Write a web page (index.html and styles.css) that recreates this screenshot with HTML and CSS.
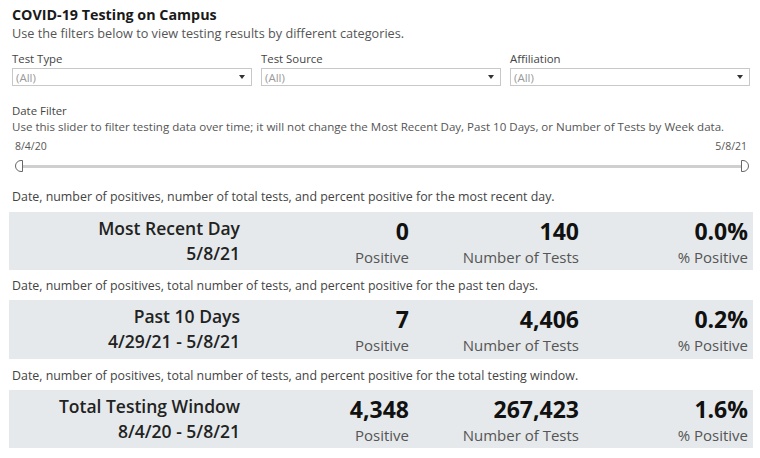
FILE: index.html
```html
<!DOCTYPE html>
<html>
<head>
<meta charset="utf-8">
<link rel="stylesheet" href="styles.css">
</head>
<body>
<div class="page">
  <h1 class="title">COVID-19 Testing on Campus</h1>
  <p class="sub">Use the filters below to view testing results by different categories.</p>
  <div class="filters">
    <div class="filter">
      <div class="flabel">Test Type</div>
      <div class="select"><span>(All)</span><span class="caret"></span></div>
    </div>
    <div class="filter">
      <div class="flabel">Test Source</div>
      <div class="select"><span>(All)</span><span class="caret"></span></div>
    </div>
    <div class="filter">
      <div class="flabel">Affiliation</div>
      <div class="select"><span>(All)</span><span class="caret"></span></div>
    </div>
  </div>
  <div class="datefilter">
    <div class="flabel">Date Filter</div>
    <div class="desc">Use this slider to filter testing data over time; it will not change the Most Recent Day, Past 10 Days, or Number of Tests by Week data.</div>
    <div class="range"><span>8/4/20</span><span>5/8/21</span></div>
    <div class="slider">
      <span class="handle left"></span>
      <span class="track"></span>
      <span class="handle right"></span>
    </div>
  </div>

  <p class="caption first">Date, number of positives, number of total tests, and percent positive for the most recent day.</p>
  <div class="panel first">
    <div class="cell label"><div class="big">Most Recent Day</div><div class="big">5/8/21</div></div>
    <div class="cell"><div class="num">0</div><div class="unit">Positive</div></div>
    <div class="cell"><div class="num">140</div><div class="unit">Number of Tests</div></div>
    <div class="cell"><div class="num">0.0%</div><div class="unit">% Positive</div></div>
  </div>

  <p class="caption">Date, number of positives, total number of tests, and percent positive for the past ten days.</p>
  <div class="panel tall">
    <div class="cell label"><div class="big">Past 10 Days</div><div class="big">4/29/21 - 5/8/21</div></div>
    <div class="cell"><div class="num">7</div><div class="unit">Positive</div></div>
    <div class="cell"><div class="num">4,406</div><div class="unit">Number of Tests</div></div>
    <div class="cell"><div class="num">0.2%</div><div class="unit">% Positive</div></div>
  </div>

  <p class="caption last">Date, number of positives, total number of tests, and percent positive for the total testing window.</p>
  <div class="panel">
    <div class="cell label"><div class="big">Total Testing Window</div><div class="big">8/4/20 - 5/8/21</div></div>
    <div class="cell"><div class="num">4,348</div><div class="unit">Positive</div></div>
    <div class="cell"><div class="num">267,423</div><div class="unit">Number of Tests</div></div>
    <div class="cell"><div class="num">1.6%</div><div class="unit">% Positive</div></div>
  </div>
</div>
</body>
</html>
```
FILE: styles.css
```css
* { box-sizing: border-box; }
html, body { margin: 0; padding: 0; background: #fff; }
body {
  font-family: "Open Sans", "Liberation Sans", sans-serif;
  color: #333;
  width: 760px;
  height: 458px;
  overflow: hidden;
}
.page { padding: 6px 7px 0 9px; }
.title {
  margin: 0 0 0 3px;
  font-size: 14.3px;
  font-weight: 700;
  color: #1a1a1a;
  line-height: 18px;
}
.sub {
  margin: 1px 0 0 3px;
  font-size: 12.7px;
  line-height: 16px;
  color: #555;
  white-space: nowrap;
}
.filters {
  display: grid;
  grid-template-columns: 240px 240px 240px;
  gap: 9px;
  margin: 11px 0 0 3px;
}
.flabel {
  font-size: 11.4px;
  line-height: 14px;
  color: #444;
}
.select {
  margin-top: 2px;
  height: 18px;
  border: 1px solid #c8c8c8;
  display: flex;
  align-items: center;
  justify-content: space-between;
  padding: 0 6px 0 3px;
  font-size: 11.5px;
  color: #9a9a9a;
}
.caret {
  width: 0; height: 0;
  border-left: 3px solid transparent;
  border-right: 3px solid transparent;
  border-top: 4px solid #333;
}
.datefilter { margin: 18px 0 0 3px; }
.desc {
  margin-top: 2px;
  font-size: 11.55px;
  line-height: 14px;
  color: #555;
  white-space: nowrap;
}
.range {
  display: flex;
  justify-content: space-between;
  font-size: 10.5px;
  line-height: 13px;
  color: #555;
  margin: 6px 6px 0 3px;
}
.slider {
  display: flex;
  align-items: center;
  margin: 7px 4px 0 3px;
  height: 12px;
}
.track { flex: 1; height: 3px; background: #cfcfcf; }
.handle {
  width: 8px; height: 12px;
  border: 1px solid #666;
  background: #fff;
}
.handle.left { border-radius: 6px 0 0 6px; }
.handle.right { border-radius: 0 6px 6px 0; }
.caption {
  margin: 8px 0 0 3px;
  font-size: 12.4px;
  line-height: 16px;
  color: #444;
  white-space: nowrap;
}
.caption.first { margin-top: 17px; }
.caption.last { margin-top: 9px; }
.panel {
  margin-top: 6px;
  width: 744px;
  height: 58px;
  background: #e5e9eb;
  display: grid;
  grid-template-columns: 231px 169px 170px 169px;
  padding-right: 5px;
}
.panel.first { margin-top: 7px; }
.panel.tall { height: 59px; }
.cell { text-align: right; padding-top: 4px; }
.cell.label { padding-top: 4px; }
.big {
  font-size: 17.5px;
  line-height: 25px;
  font-weight: 600;
  color: #222;
}
.num {
  font-size: 23px;
  line-height: 31px;
  font-weight: 700;
  color: #111;
}
.unit {
  font-size: 15px;
  line-height: 21px;
  color: #555;
}
```
